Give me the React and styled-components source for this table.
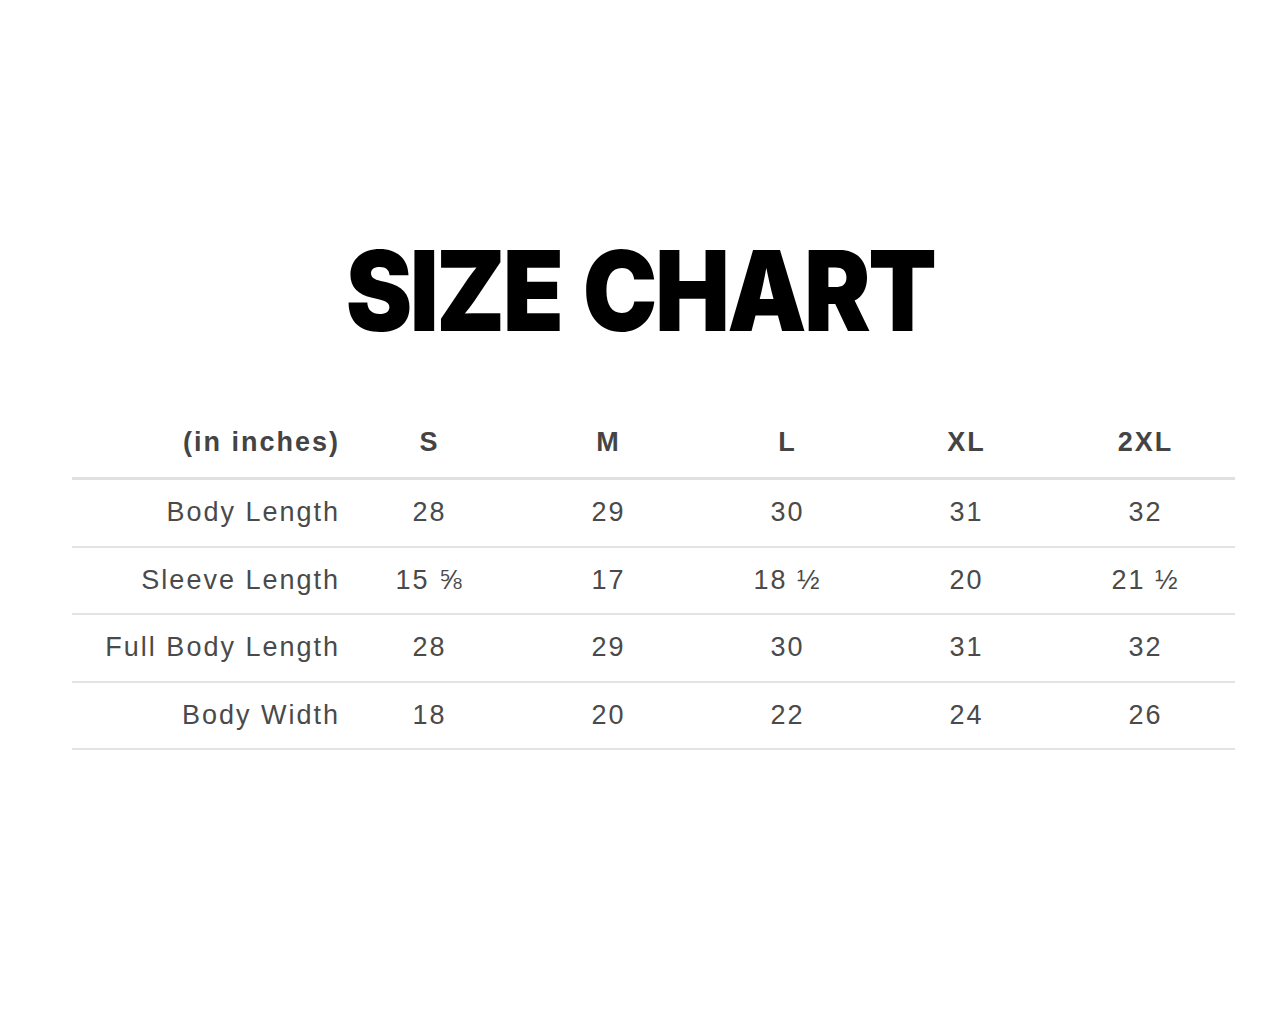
import React from 'react';
import styled, { createGlobalStyle } from 'styled-components';

const GlobalStyle = createGlobalStyle`
  html, body {
    margin: 0;
    padding: 0;
    background: #ffffff;
  }
`;

const Page = styled.div`
  width: 1280px;
  min-height: 1024px;
  display: flex;
  flex-direction: column;
  align-items: center;
  background: #fff;
`;

const Title = styled.h1`
  margin: 235px 0 0;
  font-family: Inter, "Liberation Sans", sans-serif;
  font-weight: 900;
  font-size: 111px;
  line-height: 111px;
  letter-spacing: -0.026em;
  word-spacing: 0.04em;
  color: #000;
  transform: scaleX(0.9);
`;

const Table = styled.table`
  align-self: flex-start;
  margin: 61px 0 0 72px;
  border-collapse: collapse;
  table-layout: fixed;
  width: 1163px;
  font-family: "Liberation Sans", Arial, sans-serif;
  font-size: 27px;
  letter-spacing: 2px;
  color: #4a4a4a;
`;

const HeadCell = styled.th`
  height: 70px;
  width: ${(p) => (p.$label ? '268px' : '179px')};
  padding: 0;
  font-weight: 700;
  color: #444;
  text-align: ${(p) => (p.$label ? 'right' : 'center')};
  vertical-align: middle;
  border-bottom: 3px solid #e0e0e0;
`;

const Cell = styled.td`
  height: 65.5px;
  padding: 0;
  text-align: ${(p) => (p.$label ? 'right' : 'center')};
  vertical-align: middle;
  border-bottom: 2px solid #e3e3e3;
`;

const sizes = ['S', 'M', 'L', 'XL', '2XL'];

const rows = [
  { label: 'Body Length', values: ['28', '29', '30', '31', '32'] },
  { label: 'Sleeve Length', values: ['15 ⅝', '17', '18 ½', '20', '21 ½'] },
  { label: 'Full Body Length', values: ['28', '29', '30', '31', '32'] },
  { label: 'Body Width', values: ['18', '20', '22', '24', '26'] },
];

export default function App() {
  return (
    <Page>
      <GlobalStyle />
      <Title>SIZE CHART</Title>
      <Table>
        <thead>
          <tr>
            <HeadCell $label>(in inches)</HeadCell>
            {sizes.map((s) => (
              <HeadCell key={s}>{s}</HeadCell>
            ))}
          </tr>
        </thead>
        <tbody>
          {rows.map((r) => (
            <tr key={r.label}>
              <Cell $label>{r.label}</Cell>
              {r.values.map((v, i) => (
                <Cell key={i}>{v}</Cell>
              ))}
            </tr>
          ))}
        </tbody>
      </Table>
    </Page>
  );
}
